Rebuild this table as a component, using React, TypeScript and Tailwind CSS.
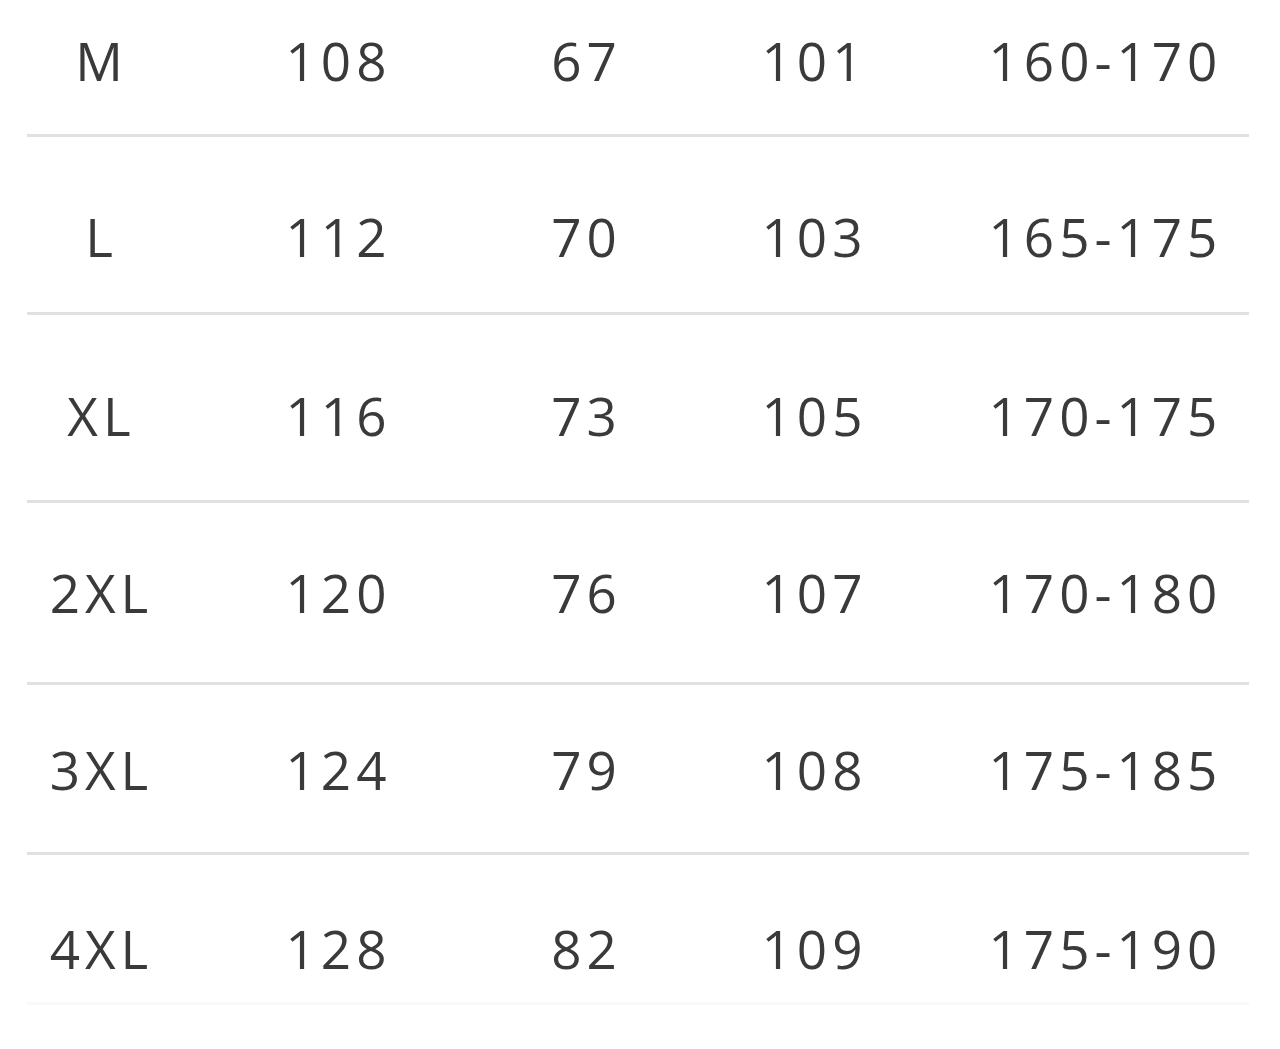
const rows = [
  { cells: ["M", "108", "67", "101", "160-170"], cls: "h-[137px] pt-[34px] border-[#e1e1e1]" },
  { cells: ["L", "112", "70", "103", "165-175"], cls: "h-[178px] pt-[73px] border-[#e1e1e1]" },
  { cells: ["XL", "116", "73", "105", "170-175"], cls: "h-[188px] pt-[74px] border-[#e1e1e1]" },
  { cells: ["2XL", "120", "76", "107", "170-180"], cls: "h-[182px] pt-[63px] border-[#e1e1e1]" },
  { cells: ["3XL", "124", "79", "108", "175-185"], cls: "h-[170px] pt-[58px] border-[#e1e1e1]" },
  { cells: ["4XL", "128", "82", "109", "175-190"], cls: "h-[150px] pt-[67px] border-[#f9f9f9]" },
];

export default function App() {
  return (
    <div className="min-h-[1049px] w-[1280px] bg-white font-['Open_Sans',sans-serif] text-[#3a3a3a]">
      <div className="ml-[27px] w-[1222px]">
        {rows.map((row) => (
          <div
            key={row.cells[0]}
            className={`grid grid-cols-[144px_330px_166px_290px_292px] border-b-[3px] ${row.cls}`}
          >
            {row.cells.map((c, i) => (
              <div key={i} className="pl-[5px] text-center text-[53px] leading-none tracking-[5px]">
                {c}
              </div>
            ))}
          </div>
        ))}
      </div>
    </div>
  );
}
